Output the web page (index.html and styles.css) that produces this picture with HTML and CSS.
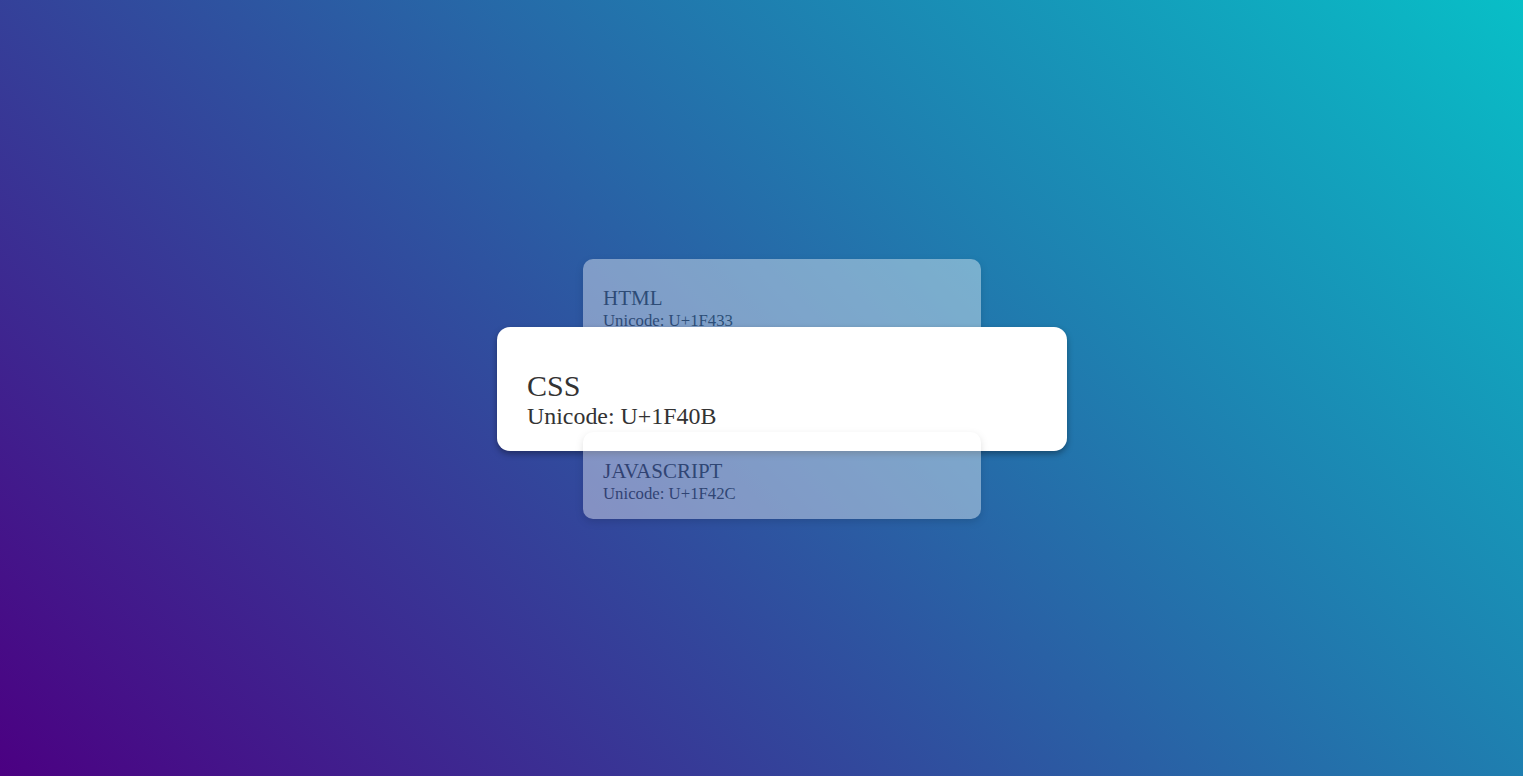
FILE: index.html
```html
<!DOCTYPE html>
<html lang="en">
<head>
<meta charset="utf-8">
<title>Cards</title>
<link rel="stylesheet" href="styles.css">
</head>
<body>
  <main class="stage">
    <div class="stack">
      <div class="card card-side">
        <div class="card-title">HTML</div>
        <div class="card-code">Unicode: U+1F433</div>
      </div>
      <div class="card card-active">
        <div class="card-title">CSS</div>
        <div class="card-code">Unicode: U+1F40B</div>
      </div>
      <div class="card card-side">
        <div class="card-title">JAVASCRIPT</div>
        <div class="card-code">Unicode: U+1F42C</div>
      </div>
    </div>
  </main>
</body>
</html>
```

FILE: styles.css
```css
html, body {
  margin: 0;
  padding: 0;
  height: 100%;
}

body {
  background: linear-gradient(45deg, #4b0082 0%, #08bfc7 100%);
  font-family: "Liberation Serif", "Times New Roman", serif;
  color: #333;
  overflow: hidden;
}

.stage {
  height: 100%;
  display: flex;
  align-items: center;
  justify-content: center;
  padding: 2px 0 0 41px;
  box-sizing: border-box;
}

.stack {
  display: flex;
  flex-direction: column;
  align-items: center;
}

.card {
  box-sizing: border-box;
  background: #fff;
  position: relative;
}

.card-side {
  width: 398px;
  height: 86.67px;
  padding: 26.8px 20px 0 20px;
  border-radius: 10px;
  opacity: 0.4;
  box-shadow: 0 3px 7px rgba(0, 0, 0, 0.3);
}

.card-side .card-title {
  font-size: 21px;
}

.card-side .card-code {
  font-size: 16.75px;
}

.card-active {
  width: 570px;
  height: 123.3px;
  margin: -18.3px 0;
  padding: 42px 29px 0 30px;
  border-radius: 13px;
  box-shadow: 0 3px 6px rgba(0, 0, 0, 0.35);
}

.card-active .card-title {
  font-size: 30px;
  line-height: 1.12;
}

.card-active .card-code {
  font-size: 23.9px;
}
```
